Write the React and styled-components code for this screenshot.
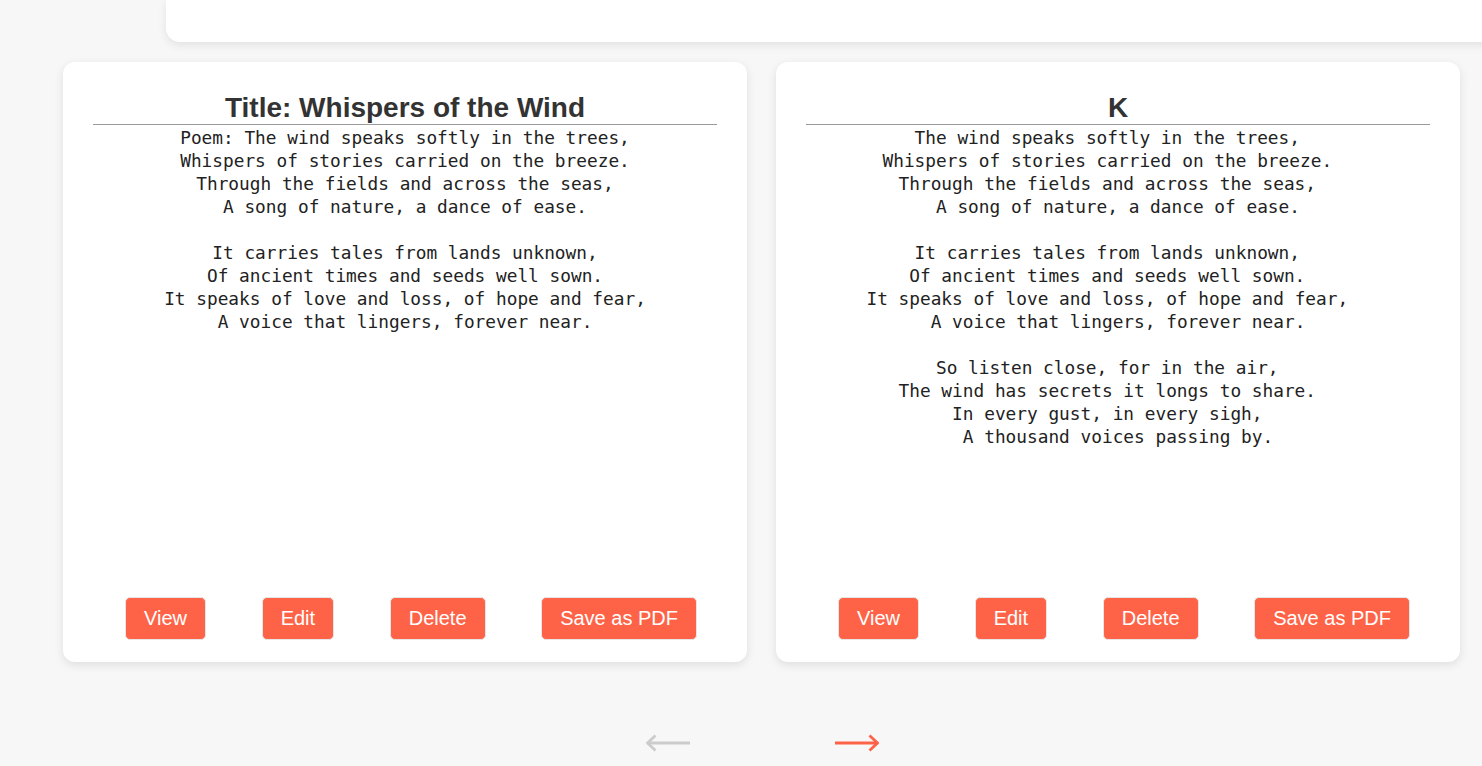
import React from "react";
import styled, { createGlobalStyle } from "styled-components";

const GlobalStyle = createGlobalStyle`
  html, body {
    margin: 0;
    padding: 0;
    background: #f7f7f7;
    overflow: hidden;
    font-family: "Liberation Sans", Arial, sans-serif;
  }
`;

const Page = styled.div`
  width: 1482px;
  height: 766px;
  overflow: hidden;
`;

const TopPanel = styled.div`
  margin-left: 166px;
  margin-right: -40px;
  height: 42px;
  background: #ffffff;
  border-radius: 0 0 0 14px;
  box-shadow: 0 3px 10px rgba(0, 0, 0, 0.09);
`;

const Content = styled.div`
  margin-left: 63px;
  width: 1397px;
`;

const CardRow = styled.div`
  display: flex;
  gap: 29px;
  margin-top: 20px;
`;

const Card = styled.div`
  box-sizing: border-box;
  width: 684px;
  height: 600px;
  background: #ffffff;
  border-radius: 12px;
  box-shadow: 0 3px 10px rgba(0, 0, 0, 0.1);
  padding: 30px 30px 22px;
  display: flex;
  flex-direction: column;
`;

const Title = styled.h2`
  margin: 0;
  font-family: "Liberation Sans", Arial, sans-serif;
  font-size: 28px;
  font-weight: 700;
  line-height: 32px;
  color: #333333;
  text-align: center;
  border-bottom: 1px solid #9a9a9a;
`;

const Poem = styled.div`
  flex: 1;
  margin: 0;
  padding-top: 1px;
  font-family: "DejaVu Sans Mono", "Liberation Mono", monospace;
  font-size: 17.8px;
  line-height: 23px;
  color: #222222;
  text-align: center;
  white-space: pre;
`;

const Actions = styled.div`
  display: flex;
  justify-content: space-between;
  padding: 0 20px 0 32px;
`;

const ActionButton = styled.button`
  font-family: "Liberation Sans", Arial, sans-serif;
  font-size: 20px;
  line-height: 23px;
  color: #ffffff;
  background: #ff6347;
  border: 1px solid #e6e6e6;
  border-radius: 5px;
  padding: 9px 18px;
  cursor: pointer;
`;

const Nav = styled.div`
  display: flex;
  justify-content: center;
  gap: 145px;
  margin-top: 71px;
  padding-left: 2px;
`;

const NavButton = styled.button`
  background: none;
  border: none;
  padding: 0;
  width: 44px;
  height: 20px;
  display: flex;
  color: ${(p) => (p.$active ? "#ff6347" : "#cccccc")};
  cursor: ${(p) => (p.$active ? "pointer" : "default")};
`;

const Arrow = ({ dir }) => (
  <svg width="44" height="20" viewBox="0 0 44 20" fill="none">
    {dir === "left" ? (
      <>
        <line x1="1.5" y1="10" x2="44" y2="10" stroke="currentColor" strokeWidth="2.8" />
        <polyline points="9.5,2.5 1.5,10 9.5,17.5" stroke="currentColor" strokeWidth="2.8" fill="none" />
      </>
    ) : (
      <>
        <line x1="0" y1="10" x2="42.5" y2="10" stroke="currentColor" strokeWidth="2.8" />
        <polyline points="34.5,2.5 42.5,10 34.5,17.5" stroke="currentColor" strokeWidth="2.8" fill="none" />
      </>
    )}
  </svg>
);

const poems = [
  {
    title: "Title: Whispers of the Wind",
    body: [
      "Poem: The wind speaks softly in the trees,",
      "Whispers of stories carried on the breeze.",
      "Through the fields and across the seas,",
      "A song of nature, a dance of ease.",
      "",
      "It carries tales from lands unknown,",
      "Of ancient times and seeds well sown.",
      "It speaks of love and loss, of hope and fear,",
      "A voice that lingers, forever near.",
    ].join("\n"),
  },
  {
    title: "K",
    body: [
      "The wind speaks softly in the trees,  ",
      "Whispers of stories carried on the breeze.  ",
      "Through the fields and across the seas,  ",
      "A song of nature, a dance of ease.",
      "",
      "It carries tales from lands unknown,  ",
      "Of ancient times and seeds well sown.  ",
      "It speaks of love and loss, of hope and fear,  ",
      "A voice that lingers, forever near.",
      "",
      "So listen close, for in the air,  ",
      "The wind has secrets it longs to share.  ",
      "In every gust, in every sigh,  ",
      "A thousand voices passing by.",
    ].join("\n"),
  },
];

export default function App() {
  return (
    <Page>
      <GlobalStyle />
      <TopPanel />
      <Content>
        <CardRow>
          {poems.map((p, i) => (
            <Card key={i}>
              <Title>{p.title}</Title>
              <Poem>{p.body}</Poem>
              <Actions>
                <ActionButton>View</ActionButton>
                <ActionButton>Edit</ActionButton>
                <ActionButton>Delete</ActionButton>
                <ActionButton>Save as PDF</ActionButton>
              </Actions>
            </Card>
          ))}
        </CardRow>
        <Nav>
          <NavButton aria-label="Previous">
            <Arrow dir="left" />
          </NavButton>
          <NavButton $active aria-label="Next">
            <Arrow dir="right" />
          </NavButton>
        </Nav>
      </Content>
    </Page>
  );
}
